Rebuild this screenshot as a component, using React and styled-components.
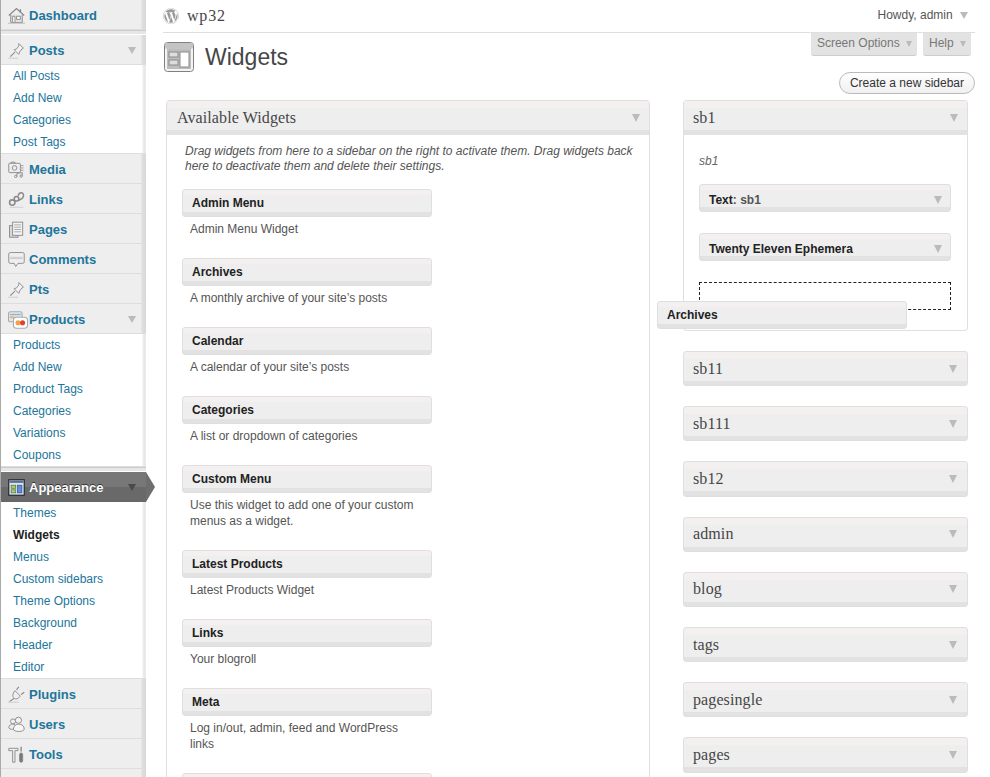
import React from "react";
import styled, { createGlobalStyle } from "styled-components";
import { FaWordpress } from "react-icons/fa";

const GlobalStyle = createGlobalStyle`
  html, body {
    margin: 0;
    padding: 0;
    background: #fff;
  }
  body {
    font-family: "Liberation Sans", Arial, sans-serif;
    font-size: 12px;
    color: #333;
  }
`;

/* sidebar icons, drawn in the grey of the old admin sprite */
const Glyph = ({ children, $wide }) => (
  <IconSvg $wide={$wide} viewBox="0 0 22 22" fill="none" stroke="#8a8a8a" strokeWidth="1.2">
    {children}
  </IconSvg>
);

const icons = {
  dashboard: (
    <Glyph>
      <path d="M1 11 11 2l10 9" strokeWidth="1.7" />
      <path d="M3.5 10v10h15V10" fill="#e2e2e2" />
      <path d="M16 3v4" strokeWidth="2" />
      <path d="M6 12h3v8H6zM11 12h5v4h-5z" fill="#fff" />
      <path d="M0 21h22" stroke="#bbb" />
    </Glyph>
  ),
  pin: (
    <Glyph>
      <path d="M14 2l6 6-2 1-3 4-1 3-6-6 3-1 3-4z" fill="#f2f2f2" />
      <path d="M9 13l-6 6" strokeWidth="1.4" />
      <path d="M0 21h13" stroke="#ccc" />
    </Glyph>
  ),
  media: (
    <Glyph>
      <rect x="1" y="3" width="15" height="12" rx="1" fill="#eee" />
      <circle cx="8.5" cy="9" r="3" />
      <path d="M4 3V1.500h5V3" />
      <path d="M16 6h4M16 9h4M16 12h4" stroke="#999" />
      <path d="M11.500 20v-4l7-1v4" />
      <circle cx="10" cy="20" r="1.500" />
      <circle cx="17" cy="19.500" r="1.500" />
    </Glyph>
  ),
  links: (
    <Glyph>
      <circle cx="5.500" cy="15" r="3.500" strokeWidth="2" />
      <circle cx="11" cy="10" r="3" strokeWidth="2" />
      <path d="M13 6c1-3 4-5 6-3s1 5-1 7l-4 2" strokeWidth="2" />
      <path d="M2 21h18" stroke="#ccc" />
    </Glyph>
  ),
  pages: (
    <Glyph>
      <rect x="2" y="6" width="11" height="15" fill="#d8d8d8" />
      <rect x="6" y="1.500" width="13" height="17" fill="#f4f4f4" />
      <path d="M8 5h9M8 8h9M8 11h9M8 14h9" stroke="#a5a5a5" />
    </Glyph>
  ),
  comments: (
    <Glyph>
      <path d="M3 2h16a2 2 0 0 1 2 2v10a2 2 0 0 1-2 2h-6l-3 4-2-4H3a2 2 0 0 1-2-2V4a2 2 0 0 1 2-2z" fill="#efefef" />
      <path d="M3 9h16" stroke="#d0d0d0" strokeWidth="3" />
    </Glyph>
  ),
  products: (
    <Glyph $wide>
      <rect x="0.500" y="2" width="15" height="11" rx="2" fill="#dfe6ee" stroke="#aaa" />
      <path d="M2 5h12" stroke="#8fb3d0" strokeWidth="1.500" />
      <path d="M2 8h5" stroke="#e8b26b" strokeWidth="2" />
      <rect x="6" y="8" width="15.500" height="12" rx="3.500" fill="#fff" stroke="#aaa" />
      <circle cx="11" cy="14" r="2.800" fill="#f0a14a" stroke="none" />
      <circle cx="16" cy="14" r="2.800" fill="#e0402f" stroke="none" />
    </Glyph>
  ),
  appearance: (
    <Glyph>
      <rect x="1" y="1" width="20" height="20" fill="#dfe3ee" stroke="#1c2433" strokeWidth="1.500" />
      <path d="M2 2h18v3H2z" fill="#5a6d93" stroke="none" />
      <rect x="4" y="8" width="6" height="4" fill="#a6cf6a" stroke="#4a6a30" strokeWidth="0.800" />
      <rect x="4" y="14" width="6" height="4" fill="#a6cf6a" stroke="#4a6a30" strokeWidth="0.800" />
      <rect x="12" y="8" width="6" height="10" fill="#5f8fd8" stroke="#274a8a" strokeWidth="0.800" />
    </Glyph>
  ),
  plugins: (
    <Glyph>
      <path d="M9 6l7 7-3 3c-2 1-5 1-6-1s-1-4 0-6z" fill="#efefef" />
      <path d="M11 5l3-4M17 11l4-3" strokeWidth="1.500" />
      <path d="M8 16l-6 4" strokeWidth="1.500" />
      <path d="M0 21h14" stroke="#ccc" />
    </Glyph>
  ),
  users: (
    <Glyph>
      <circle cx="6.500" cy="7" r="3.200" fill="#f2f2f2" />
      <circle cx="13.500" cy="5.500" r="4" fill="#f2f2f2" />
      <path d="M1 15c0-3 3-4.500 5-4.500s5 1.500 5 4.500-10 3-10 0z" fill="#eee" />
      <path d="M7 17c0-4 3-6.500 7-6.500s7 2.500 7 6.500-14 4-14 0z" fill="#f6f6f6" />
    </Glyph>
  ),
  tools: (
    <Glyph>
      <path d="M1 3h12v3H9v15H6V6H1z" fill="#efefef" />
      <path d="M17 1v6" strokeWidth="1.800" />
      <rect x="15" y="9" width="4" height="12" rx="2" fill="#777" />
    </Glyph>
  ),
  settings: (
    <Glyph>
      <rect x="2" y="3" width="18" height="17" fill="#eee" />
      <path d="M2 4h18" stroke="#666" strokeWidth="2" />
    </Glyph>
  ),
};

// the last head and widget bar start at the fold, their labels fall below it
const menu = [
  { label: "Dashboard", icon: "dashboard", gapAfter: true },
  { label: "Posts", icon: "pin", open: true, items: ["All Posts", "Add New", "Categories", "Post Tags"] },
  { label: "Media", icon: "media" },
  { label: "Links", icon: "links" },
  { label: "Pages", icon: "pages" },
  { label: "Comments", icon: "comments" },
  { label: "Pts", icon: "pin" },
  {
    label: "Products",
    icon: "products",
    open: true,
    gapAfter: true,
    items: ["Products", "Add New", "Product Tags", "Categories", "Variations", "Coupons"],
  },
  {
    label: "Appearance",
    icon: "appearance",
    current: true,
    open: true,
    items: ["Themes", "Widgets", "Menus", "Custom sidebars", "Theme Options", "Background", "Header", "Editor"],
  },
  { label: "Plugins", icon: "plugins" },
  { label: "Users", icon: "users" },
  { label: "Tools", icon: "tools" },
  { label: "", icon: "settings" },
];

const widgets = [
  ["Admin Menu", "Admin Menu Widget"],
  ["Archives", "A monthly archive of your site\u2019s posts"],
  ["Calendar", "A calendar of your site\u2019s posts"],
  ["Categories", "A list or dropdown of categories"],
  ["Custom Menu", "Use this widget to add one of your custom menus as a widget."],
  ["Latest Products", "Latest Products Widget"],
  ["Links", "Your blogroll"],
  ["Meta", "Log in/out, admin, feed and WordPress links"],
  ["", ""],
];

const sidebars = ["sb11", "sb111", "sb12", "admin", "blog", "tags", "pagesingle", "pages"];

const App = () => {
  return (
    <Page>
      <GlobalStyle />
      <AdminMenu>
        {menu.map((m) => (
          <MenuGroup key={m.icon + m.label} $gap={m.gapAfter}>
            <MenuHead $current={m.current}>
              <IconSlot>{icons[m.icon]}</IconSlot>
              <MenuLabel $current={m.current}>{m.label}</MenuLabel>
              {m.open && <MenuArrow $current={m.current} />}
              {m.current && <CurrentPointer />}
            </MenuHead>
            {m.items && (
              <SubMenu>
                {m.items.map((item) => (
                  <SubItem key={item} $active={item === "Widgets"}>
                    {item}
                  </SubItem>
                ))}
              </SubMenu>
            )}
          </MenuGroup>
        ))}
      </AdminMenu>

      <Content>
        <TopBar>
          <SiteName>
            <FaWordpress size={16} color="#999" />
            <span>wp32</span>
          </SiteName>
          <Howdy>
            Howdy, admin <HowdyArrow />
          </Howdy>
        </TopBar>

        <TitleRow>
          <TitleLeft>
            <WidgetsIcon viewBox="0 0 30 30">
              <rect x="0.500" y="0.500" width="29" height="29" rx="3" fill="#f4f4f4" stroke="#808080" />
              <rect x="1" y="1" width="28" height="6" rx="2" fill="#c4c4c4" />
              <rect x="3" y="7" width="24" height="20" fill="#bdbdbd" />
              <rect x="5" y="10" width="9" height="5" fill="#ddd" stroke="#8a8a8a" />
              <rect x="5" y="18" width="9" height="5" fill="#ddd" stroke="#8a8a8a" />
              <rect x="16" y="10" width="9" height="15" fill="#fff" stroke="#8a8a8a" />
            </WidgetsIcon>
            <PageTitle>Widgets</PageTitle>
          </TitleLeft>
          <TitleRight>
            <Tabs>
              <MetaTab>
                Screen Options <SmallArrow />
              </MetaTab>
              <MetaTab>
                Help <SmallArrow />
              </MetaTab>
            </Tabs>
            <PillButton>Create a new sidebar</PillButton>
          </TitleRight>
        </TitleRow>

        <Columns>
          <LeftPanel>
            <PanelHead $pad={10}>
              <span>Available Widgets</span>
              <PanelArrow />
            </PanelHead>
            <PanelBody>
              <Intro>
                Drag widgets from here to a sidebar on the right to activate them. Drag widgets back here to
                deactivate them and delete their settings.
              </Intro>
              {widgets.map(([name, desc]) => (
                <WidgetItem key={name}>
                  <WidgetBar>{name}</WidgetBar>
                  <WidgetDesc>{desc}</WidgetDesc>
                </WidgetItem>
              ))}
            </PanelBody>
          </LeftPanel>

          <RightColumn>
            <OpenSidebar>
              <PanelHead $pad={9}>
                <span>sb1</span>
                <PanelArrow />
              </PanelHead>
              <SidebarBody>
                <SidebarNote>sb1</SidebarNote>
                <PlacedWidget>
                  <span>
                    Text<Muted>: sb1</Muted>
                  </span>
                  <PanelArrow />
                </PlacedWidget>
                <PlacedWidget>
                  <span>Twenty Eleven Ephemera</span>
                  <PanelArrow />
                </PlacedWidget>
                <DropSlot />
              </SidebarBody>
              <DraggedWidget>Archives</DraggedWidget>
            </OpenSidebar>
            {sidebars.map((s) => (
              <ClosedSidebar key={s}>
                <span>{s}</span>
                <PanelArrow />
              </ClosedSidebar>
            ))}
          </RightColumn>
        </Columns>
      </Content>
    </Page>
  );
};

export default App;

const Page = styled.div`
  display: flex;
  width: 990px;
  height: 777px;
  overflow: hidden;
`;

const AdminMenu = styled.nav`
  flex: 0 0 146px;
  box-sizing: border-box;
  border-left: 1px solid #aaa;
`;

const MenuGroup = styled.div`
  padding-bottom: ${(p) => (p.$gap ? "5px" : "0")};
  background: ${(p) => (p.$gap ? "linear-gradient(#ccc 0 1px, #e6e6e6 1px 4px, #fff 4px)" : "transparent")};
  background-position: bottom;
  background-size: 100% 5px;
  background-repeat: no-repeat;
`;

const MenuHead = styled.div`
  position: relative;
  display: flex;
  align-items: center;
  height: 30px;
  box-sizing: border-box;
  padding: 2px 0 0 6px;
  background: ${(p) =>
    p.$current
      ? "linear-gradient(#777 0 50%, #696969 50%)"
      : "linear-gradient(to right, #eee 140px, #dedede 141px, #d8d8d8 145px)"};
  border-bottom: 1px solid ${(p) => (p.$current ? "#666" : "#ddd")};
`;

const IconSlot = styled.span`
  display: flex;
  align-items: center;
  width: 22px;
  height: 22px;
`;

const IconSvg = styled.svg`
  flex: none;
  width: ${(p) => (p.$wide ? "20px" : "17px")};
  height: ${(p) => (p.$wide ? "20px" : "17px")};
  margin-left: 1px;
`;

const MenuLabel = styled.span`
  font-size: 13px;
  font-weight: 700;
  color: ${(p) => (p.$current ? "#fff" : "#21759b")};
  text-shadow: ${(p) => (p.$current ? "0 -1px 0 #333" : "none")};
`;

const MenuArrow = styled.i`
  position: absolute;
  right: 10px;
  top: 12px;
  border-style: solid;
  border-width: 7px 4px 0;
  border-color: ${(p) => (p.$current ? "#4a4a4a" : "#bbb")} transparent transparent;
`;

const CurrentPointer = styled.i`
  position: absolute;
  right: -9px;
  top: 0;
  border-style: solid;
  border-width: 15px 0 15px 9px;
  border-color: transparent transparent transparent #6e6e6e;
`;

const SubMenu = styled.ul`
  list-style: none;
  margin: 0;
  padding: 0;
  background: linear-gradient(to right, #fff 141px, #e4e4e4 143px, #eee 145px);
  border-bottom: 1px solid #ddd;
`;

const SubItem = styled.li`
  height: 22px;
  line-height: 23px;
  padding-left: 12px;
  font-size: 12px;
  color: ${(p) => (p.$active ? "#222" : "#21759b")};
  font-weight: ${(p) => (p.$active ? 700 : 400)};
`;

const Content = styled.main`
  flex: 0 0 812px;
  margin-left: 17px;
`;

const TopBar = styled.header`
  display: flex;
  justify-content: space-between;
  align-items: center;
  height: 32px;
  border-bottom: 1px solid #dfdfdf;
`;

const SiteName = styled.div`
  display: flex;
  align-items: center;
  gap: 8px;
  font-family: "Liberation Serif", Georgia, serif;
  font-size: 16px;
  letter-spacing: 0.8px;
  color: #464646;
  margin-top: -1px;
`;

const Howdy = styled.div`
  margin-right: 7px;
  margin-top: -2px;
  color: #555;
`;

const SmallArrow = styled.i`
  display: inline-block;
  margin-left: 3px;
  border-style: solid;
  border-width: 6px 3px 0;
  border-color: #bbb transparent transparent;
`;

const HowdyArrow = styled(SmallArrow)`
  margin-left: 4px;
  border-width: 7px 4px 0;
`;

const TitleRow = styled.div`
  display: flex;
  justify-content: space-between;
  height: 67px;
`;

const TitleLeft = styled.div`
  display: flex;
  align-items: flex-start;
  padding-top: 9px;
`;

const WidgetsIcon = styled.svg`
  width: 30px;
  height: 30px;
  margin: 0 11px 0 1px;
`;

const PageTitle = styled.h1`
  margin: 0;
  font-weight: 400;
  font-size: 23px;
  line-height: 30px;
  color: #464646;
`;

const TitleRight = styled.div`
  display: flex;
  flex-direction: column;
  align-items: flex-end;
`;

const Tabs = styled.div`
  display: flex;
  gap: 6px;
  margin-right: 4px;
`;

const MetaTab = styled.div`
  height: 22px;
  line-height: 21px;
  padding: 0 5px 0 6px;
  background: #e3e3e3;
  border-bottom: 1px solid #ccc;
  border-radius: 0 0 3px 3px;
  color: #777;
`;

const PillButton = styled.div`
  margin-top: 16px;
  height: 22px;
  line-height: 20px;
  box-sizing: border-box;
  padding: 0 10px;
  background: linear-gradient(#fff, #f0f0f0);
  border: 1px solid #bbb;
  border-radius: 11px;
  color: #333;
`;

const Columns = styled.div`
  display: grid;
  grid-template-columns: 484px 285px;
  column-gap: 33px;
  margin-left: 3px;
  align-items: start;
`;

const LeftPanel = styled.section`
  border: 1px solid #dfdfdf;
  border-radius: 3px 3px 0 0;
  min-height: 800px;
`;

const serifHead = `
  display: flex;
  justify-content: space-between;
  align-items: center;
  box-sizing: border-box;
  font-family: "Liberation Serif", Georgia, serif;
  font-size: 16px;
  letter-spacing: 0.1px;
  color: #464646;
  background: linear-gradient(#f5f0f0 0 7px, #eee 7px 29px, #e2e2e2 29px);
`;

const PanelHead = styled.div`
  ${serifHead}
  height: 34px;
  padding: 0 9px 0 ${(p) => p.$pad}px;
`;

const PanelArrow = styled.i`
  border-style: solid;
  border-width: 8px 4px 0;
  border-color: #bbb transparent transparent;
`;

const PanelBody = styled.div`
  padding: 9px 15px 0;
`;

const Intro = styled.p`
  margin: 0 0 15px 3px;
  font-style: italic;
  line-height: 15px;
  color: #555;
`;

const WidgetItem = styled.div`
  width: 250px;
  margin-bottom: 21px;
`;

const barLook = `
  box-sizing: border-box;
  height: 28px;
  border: 1px solid #dfdfdf;
  border-radius: 3px;
  background: linear-gradient(#f5f0f0 0 5px, #eee 5px 22px, #e2e2e2 22px);
  font-weight: 700;
  color: #222;
`;

const WidgetBar = styled.div`
  ${barLook}
  line-height: 26px;
  padding-left: 9px;
`;

const WidgetDesc = styled.div`
  padding: 4px 8px 0;
  line-height: 16px;
  min-height: 16px;
  color: #555;
`;

const RightColumn = styled.div`
  display: flex;
  flex-direction: column;
`;

const OpenSidebar = styled.section`
  position: relative;
  border: 1px solid #dfdfdf;
  border-radius: 3px;
  margin-bottom: 20px;
`;

const SidebarBody = styled.div`
  height: 195px;
  box-sizing: border-box;
  padding: 19px 16px 0 15px;
`;

const SidebarNote = styled.p`
  margin: 0 0 16px;
  font-style: italic;
  line-height: 14px;
  color: #666;
`;

const PlacedWidget = styled.div`
  ${barLook}
  display: flex;
  justify-content: space-between;
  align-items: center;
  padding: 3px 8px 0 9px;
  margin-bottom: 21px;
`;

const Muted = styled.span`
  color: #555;
`;

const DropSlot = styled.div`
  height: 28px;
  box-sizing: border-box;
  border: 1px dashed #222;
`;

const DraggedWidget = styled.div`
  ${barLook}
  position: absolute;
  left: -27px;
  top: 200px;
  width: 250px;
  line-height: 26px;
  padding-left: 9px;
`;

const ClosedSidebar = styled.section`
  ${serifHead}
  flex: 0 0 auto;
  height: 35.2px;
  margin-bottom: 20px;
  padding: 0 10px 0 9px;
  border: 1px solid #dfdfdf;
  border-radius: 3px;
`;
